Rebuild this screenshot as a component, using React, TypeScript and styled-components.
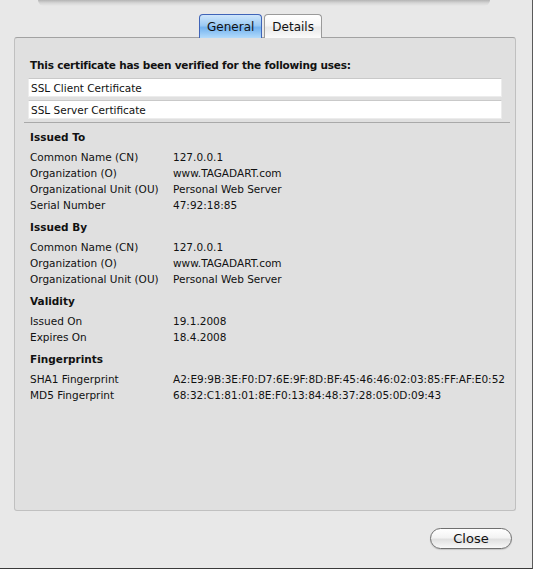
import React from "react";
import styled, { createGlobalStyle } from "styled-components";

const Global = createGlobalStyle`
  html, body { margin: 0; padding: 0; background: #e8e8e8; }
  body { font-family: "DejaVu Sans", "Liberation Sans", sans-serif; }
`;

const Window = styled.div`
  width: 533px;
  height: 569px;
  box-sizing: border-box;
  background: #e8e8e8;
  display: flex;
  flex-direction: column;
  border-right: 1px solid #5a5a5a;
  border-bottom: 1px solid #3a3a3a;
  overflow: hidden;
`;

const TopArea = styled.div`
  height: 14px;
  padding: 0 42px 0 38px;
`;

const SheetShadow = styled.div`
  height: 6px;
  border-radius: 0 0 6px 6px;
  background: linear-gradient(#b4b4b4, #d6d6d6 50%, #e8e8e8);
`;

const TabBar = styled.div`
  display: flex;
  justify-content: center;
  gap: 2px;
  padding-right: 11px;
  height: 23px;
  position: relative;
  z-index: 1;
`;

const Tab = styled.div<{ $active?: boolean }>`
  box-sizing: border-box;
  height: 24px;
  padding: 0 7px;
  display: flex;
  align-items: center;
  font-size: 12px;
  color: #111;
  border-radius: 4px 4px 0 0;
  border: 1px solid ${(p) => (p.$active ? "#3f64b8" : "#9a9a9a")};
  border-bottom: none;
  background: ${(p) =>
    p.$active
      ? "linear-gradient(#cfe6fb 0%, #9ccbf4 45%, #74b3ef 55%, #b3dbfb 100%)"
      : "linear-gradient(#ffffff 0%, #f6f6f6 45%, #e9e9e9 55%, #fbfbfb 100%)"};
`;

const Panel = styled.div`
  margin: 0 16px 0 14px;
  height: 474px;
  box-sizing: border-box;
  background: #e0e0e0;
  border: 1px solid #c0c0c0;
  border-top-color: #a2a2a2;
  border-radius: 3px;
  padding: 20px 13px 0 13px;
  display: flex;
  flex-direction: column;
  font-size: 10.5px;
  color: #111;
`;

const Lead = styled.div`
  font-weight: bold;
  letter-spacing: -0.2px;
  line-height: 14px;
  padding-left: 2px;
  margin-bottom: 6px;
`;

const UseBox = styled.div`
  height: 19px;
  box-sizing: border-box;
  background: #fff;
  border: 1px solid #ececec;
  border-top-color: #c9c9c9;
  padding-left: 2px;
  display: flex;
  align-items: center;
  margin-bottom: 3px;
`;

const Separator = styled.div`
  height: 1px;
  background: #a9a9a9;
  margin: 0 -8px 0 -4px;
`;

const Section = styled.div`
  margin-top: 4px;
  padding-left: 2px;
`;

const SectionTitle = styled.div`
  font-weight: bold;
  line-height: 20px;
  margin-bottom: 2px;
`;

const Row = styled.div`
  display: grid;
  grid-template-columns: 143px 1fr;
  line-height: 16px;
  white-space: nowrap;
`;

const Footer = styled.div`
  flex: 1;
  display: flex;
  justify-content: flex-end;
  align-items: flex-start;
  padding: 17px 20px 0 0;
`;

const Button = styled.button`
  width: 82px;
  height: 21px;
  border-radius: 11px;
  border: 1px solid #6f6f6f;
  background: linear-gradient(#ffffff 0%, #f3f3f3 45%, #e0e0e0 55%, #f8f8f8 100%);
  font-family: "DejaVu Sans", sans-serif;
  font-size: 13px;
  color: #111;
  padding: 0;
  box-shadow: 0 1px 1px rgba(0, 0, 0, 0.15);
`;

type Item = [string, string];
const sections: { title: string; rows: Item[] }[] = [
  {
    title: "Issued To",
    rows: [
      ["Common Name (CN)", "127.0.0.1"],
      ["Organization (O)", "www.TAGADART.com"],
      ["Organizational Unit (OU)", "Personal Web Server"],
      ["Serial Number", "47:92:18:85"],
    ],
  },
  {
    title: "Issued By",
    rows: [
      ["Common Name (CN)", "127.0.0.1"],
      ["Organization (O)", "www.TAGADART.com"],
      ["Organizational Unit (OU)", "Personal Web Server"],
    ],
  },
  {
    title: "Validity",
    rows: [
      ["Issued On", "19.1.2008"],
      ["Expires On", "18.4.2008"],
    ],
  },
  {
    title: "Fingerprints",
    rows: [
      ["SHA1 Fingerprint", "A2:E9:9B:3E:F0:D7:6E:9F:8D:BF:45:46:46:02:03:85:FF:AF:E0:52"],
      ["MD5 Fingerprint", "68:32:C1:81:01:8E:F0:13:84:48:37:28:05:0D:09:43"],
    ],
  },
];

export default function App() {
  return (
    <Window>
      <Global />
      <TopArea>
        <SheetShadow />
      </TopArea>
      <TabBar>
        <Tab $active>General</Tab>
        <Tab>Details</Tab>
      </TabBar>
      <Panel>
        <Lead>This certificate has been verified for the following uses:</Lead>
        <UseBox>SSL Client Certificate</UseBox>
        <UseBox>SSL Server Certificate</UseBox>
        <Separator />
        {sections.map((s) => (
          <Section key={s.title}>
            <SectionTitle>{s.title}</SectionTitle>
            {s.rows.map(([k, v]) => (
              <Row key={k}>
                <span>{k}</span>
                <span>{v}</span>
              </Row>
            ))}
          </Section>
        ))}
      </Panel>
      <Footer>
        <Button>Close</Button>
      </Footer>
    </Window>
  );
}
